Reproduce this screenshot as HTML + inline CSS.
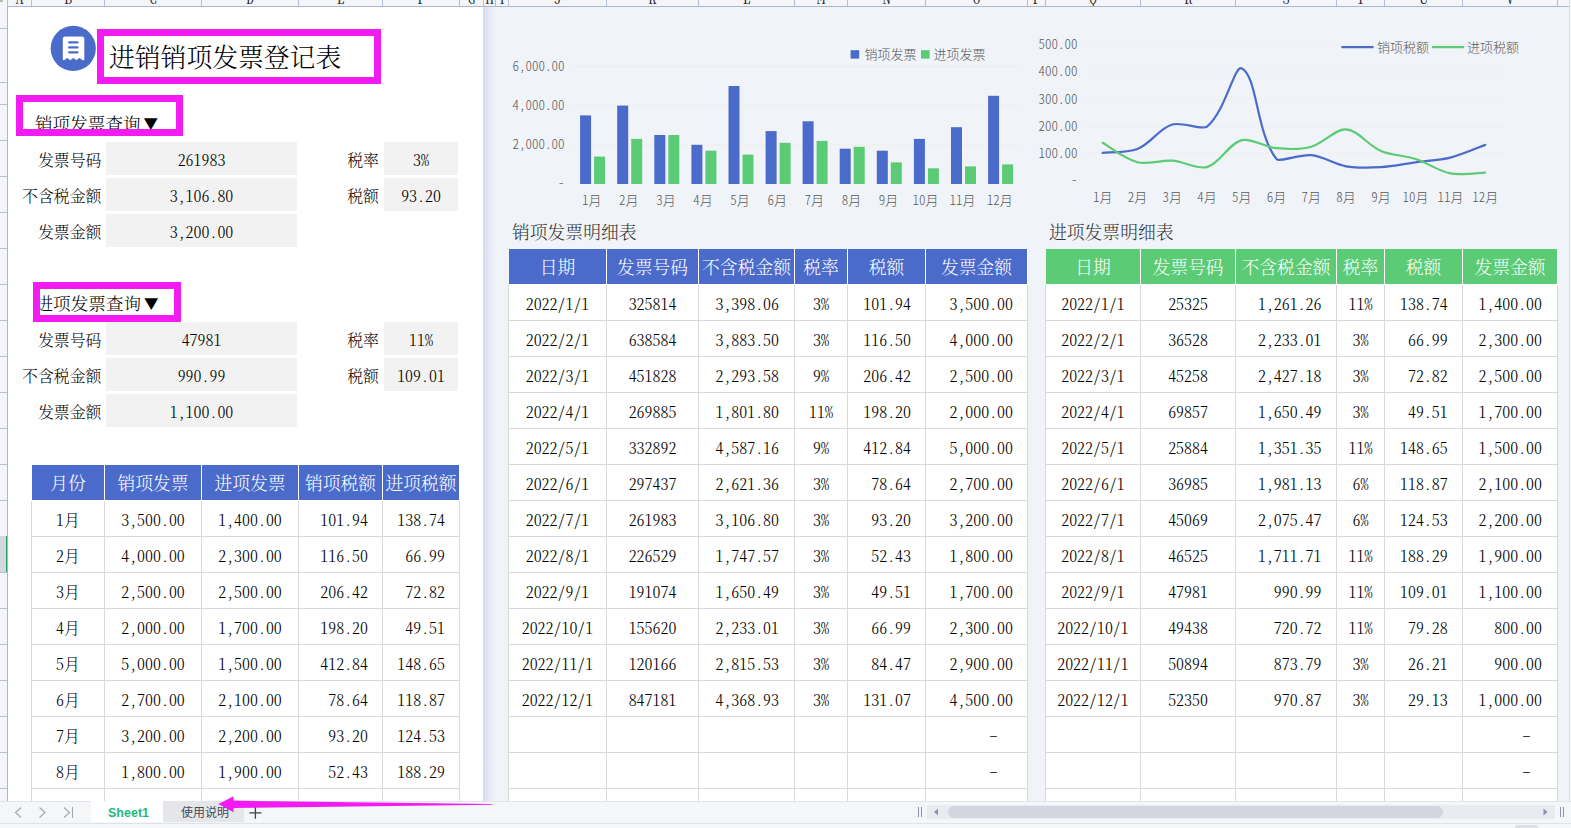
<!DOCTYPE html><html lang="zh"><head><meta charset="utf-8"><title>进销销项发票登记表</title><style>
*{box-sizing:border-box;margin:0;padding:0}
html,body{width:1571px;height:828px;overflow:hidden;background:#fff}
body{position:relative;font-family:"Noto Serif CJK SC","Liberation Serif",serif;font-feature-settings:"hwid";color:#000;font-size:15.9px;font-weight:300}
.abs{position:absolute}
.c{position:absolute;display:flex;align-items:center;justify-content:center;white-space:nowrap;overflow:hidden}
.r{justify-content:flex-end}
.l{justify-content:flex-start}
.sheet{position:absolute;left:0;top:0;width:1569px;height:801px;overflow:hidden;background:#fff}
.rbg{position:absolute;left:483px;top:6px;width:1086px;height:795px;background:#f0f3f8}
.hgrad{position:absolute;left:483px;top:6px;width:12px;height:795px;background:linear-gradient(90deg,#d6dbec 0%,#e6eaf4 50%,#f0f3f8 100%)}
.colhdr{position:absolute;left:0;top:0;width:1569px;height:7px;background:#f4f5f9;border-bottom:1px solid #aab6d3;overflow:hidden}
.colhdr span{position:absolute;top:-13px;height:20px;line-height:20px;font-size:16.5px;text-align:center;color:#222;border-right:1px solid #b4bfd8}
.rowhdr{position:absolute;left:0;top:6px;width:8px;height:795px;background:#f4f5f9;border-right:1px solid #aab6d3;overflow:hidden}
.rowhdr i{position:absolute;left:0;width:8px;height:1px;background:#b4bfd8}
.gray{background:#f2f2f2;padding-top:1px}
.hb{background:#4b6bcb;color:#fff;font-size:17.8px}
.hg{background:#5bcb75;color:#fff;font-size:17.8px}
.cell{border-right:1px solid #d9d9d9;border-bottom:1px solid #d9d9d9;background:#fff;padding-top:2px}
.mag{position:absolute;border:7px solid #f21cf2;background:#fff;overflow:hidden}
.ct{fill:#595959;font-size:13px;font-family:"Noto Sans CJK SC","Liberation Sans",sans-serif;font-weight:300}
.ui{font-family:"Liberation Sans","Noto Sans CJK SC",sans-serif;font-feature-settings:normal;font-weight:400}
</style></head><body>
<div class="sheet">
<div class="rbg"></div><div class="hgrad"></div>
<div class="colhdr">
<span style="left:0;width:8px"></span><b style="position:absolute;left:0;top:0;width:3px;height:2px;background:#b9b9b9"></b>
<span style="left:8px;width:24px">A</span>
<span style="left:32px;width:73px">B</span>
<span style="left:105px;width:97px">C</span>
<span style="left:202px;width:97px">D</span>
<span style="left:299px;width:84px">E</span>
<span style="left:383px;width:77px">F</span>
<span style="left:460px;width:24px">G</span>
<span style="left:484px;width:12px">H</span>
<span style="left:496px;width:13px">I</span>
<span style="left:509px;width:98px">J</span>
<span style="left:607px;width:92px">K</span>
<span style="left:699px;width:96px">L</span>
<span style="left:795px;width:53px">M</span>
<span style="left:848px;width:78px">N</span>
<span style="left:926px;width:102px">O</span>
<span style="left:1028px;width:18px">P</span>
<span style="left:1046px;width:95px">Q</span>
<span style="left:1141px;width:95px">R</span>
<span style="left:1236px;width:101px">S</span>
<span style="left:1337px;width:48px">T</span>
<span style="left:1385px;width:78px">U</span>
<span style="left:1463px;width:95px">V</span>
<span style="left:1558px;width:83px">W</span>
</div>
<div class="rowhdr">
<i style="top:22px"></i>
<i style="top:76px"></i>
<i style="top:98px"></i>
<i style="top:134px"></i>
<i style="top:170px"></i>
<i style="top:206px"></i>
<i style="top:242px"></i>
<i style="top:278px"></i>
<i style="top:314px"></i>
<i style="top:350px"></i>
<i style="top:386px"></i>
<i style="top:422px"></i>
<i style="top:458px"></i>
<i style="top:494px"></i>
<i style="top:530px"></i>
<i style="top:566px"></i>
<i style="top:602px"></i>
<i style="top:638px"></i>
<i style="top:674px"></i>
<i style="top:710px"></i>
<i style="top:746px"></i>
<i style="top:782px"></i>
<i style="top:818px"></i>
<b style="position:absolute;left:0;top:530px;width:8px;height:36px;background:#d3d6de;border-right:2px solid #21a366"></b>
</div>
<svg class="abs" style="left:50px;top:25px" width="48" height="48" viewBox="0 0 48 48"><circle cx="23.25" cy="23.4" r="22.6" fill="#4b6bcb"/><path d="M13 13.7q0-1.9 1.9-1.9h17.3q1.9 0 1.9 1.9V34.9H32.6L29.6 32.7 26.45 34.9 23.3 32.7 20.2 34.9 17.1 32.7 14.3 34.9H13z" fill="#fff" stroke="#fff" stroke-width="0.4" stroke-linejoin="round"/><path d="M19.2 17.3h8.3M19.2 22.4h8.3M19.2 27.3h8.3" stroke="#4b6bcb" stroke-width="2.3" stroke-linecap="round"/></svg>
<div class="mag" style="left:97px;top:29px;width:284px;height:55px"><div class="abs" style="left:5px;top:-1px;height:41px;line-height:41px;font-size:25.8px;white-space:nowrap">进销销项发票登记表</div></div>
<div class="mag" style="left:16px;top:95px;width:167px;height:41px"><div class="abs" style="left:12px;top:3px;height:36px;line-height:36px;font-size:17.6px;white-space:nowrap">销项发票查询<span style="font-size:14.5px;position:relative;top:-1px;margin-left:3px">▼</span></div></div>
<div class="mag" style="left:33px;top:282px;width:148px;height:40px"><div class="abs" style="left:-4.5px;top:-4px;height:36px;line-height:36px;font-size:17.6px;white-space:nowrap">进项发票查询<span style="font-size:14.5px;position:relative;top:-1px;margin-left:3px">▼</span></div></div>
<div class="c r" style="left:8px;top:141px;width:93.5px;height:36px">发票号码</div>
<div class="c gray" style="left:106px;top:142px;width:191px;height:33px">261983</div>
<div class="c r" style="left:8px;top:177px;width:93.5px;height:36px">不含税金额</div>
<div class="c gray" style="left:106px;top:178px;width:191px;height:33px">3,106.80</div>
<div class="c r" style="left:8px;top:213px;width:93.5px;height:36px">发票金额</div>
<div class="c gray" style="left:106px;top:214px;width:191px;height:33px">3,200.00</div>
<div class="c r" style="left:298px;top:141px;width:81px;height:36px">税率</div>
<div class="c gray" style="left:384px;top:142px;width:74px;height:33px">3%</div>
<div class="c r" style="left:298px;top:177px;width:81px;height:36px">税额</div>
<div class="c gray" style="left:384px;top:178px;width:74px;height:33px">93.20</div>
<div class="c r" style="left:8px;top:321px;width:93.5px;height:36px">发票号码</div>
<div class="c gray" style="left:106px;top:322px;width:191px;height:33px">47981</div>
<div class="c r" style="left:8px;top:357px;width:93.5px;height:36px">不含税金额</div>
<div class="c gray" style="left:106px;top:358px;width:191px;height:33px">990.99</div>
<div class="c r" style="left:8px;top:393px;width:93.5px;height:36px">发票金额</div>
<div class="c gray" style="left:106px;top:394px;width:191px;height:33px">1,100.00</div>
<div class="c r" style="left:298px;top:321px;width:81px;height:36px">税率</div>
<div class="c gray" style="left:384px;top:322px;width:74px;height:33px">11%</div>
<div class="c r" style="left:298px;top:357px;width:81px;height:36px">税额</div>
<div class="c gray" style="left:384px;top:358px;width:74px;height:33px">109.01</div>
<div class="abs" style="left:31px;top:501px;width:1px;height:300px;background:#d9d9d9"></div>
<div class="c hb" style="left:32px;top:465px;width:73px;height:36px;border-right:1px solid #fff;border-bottom:1px solid #fff">月份</div>
<div class="c hb" style="left:105px;top:465px;width:97px;height:36px;border-right:1px solid #fff;border-bottom:1px solid #fff">销项发票</div>
<div class="c hb" style="left:202px;top:465px;width:97px;height:36px;border-right:1px solid #fff;border-bottom:1px solid #fff">进项发票</div>
<div class="c hb" style="left:299px;top:465px;width:84px;height:36px;border-right:1px solid #fff;border-bottom:1px solid #fff">销项税额</div>
<div class="c hb" style="left:383px;top:465px;width:77px;height:36px;border-right:1px solid #fff;border-bottom:1px solid #fff">进项税额</div>
<div class="c cell" style="left:32px;top:501px;width:73px;height:36px;">1月</div>
<div class="c cell" style="left:105px;top:501px;width:97px;height:36px;">3,500.00</div>
<div class="c cell" style="left:202px;top:501px;width:97px;height:36px;">1,400.00</div>
<div class="c cell r" style="left:299px;top:501px;width:84px;height:36px;padding-right:14px;">101.94</div>
<div class="c cell r" style="left:383px;top:501px;width:77px;height:36px;padding-right:14px;">138.74</div>
<div class="c cell" style="left:32px;top:537px;width:73px;height:36px;">2月</div>
<div class="c cell" style="left:105px;top:537px;width:97px;height:36px;">4,000.00</div>
<div class="c cell" style="left:202px;top:537px;width:97px;height:36px;">2,300.00</div>
<div class="c cell r" style="left:299px;top:537px;width:84px;height:36px;padding-right:14px;">116.50</div>
<div class="c cell r" style="left:383px;top:537px;width:77px;height:36px;padding-right:14px;">66.99</div>
<div class="c cell" style="left:32px;top:573px;width:73px;height:36px;">3月</div>
<div class="c cell" style="left:105px;top:573px;width:97px;height:36px;">2,500.00</div>
<div class="c cell" style="left:202px;top:573px;width:97px;height:36px;">2,500.00</div>
<div class="c cell r" style="left:299px;top:573px;width:84px;height:36px;padding-right:14px;">206.42</div>
<div class="c cell r" style="left:383px;top:573px;width:77px;height:36px;padding-right:14px;">72.82</div>
<div class="c cell" style="left:32px;top:609px;width:73px;height:36px;">4月</div>
<div class="c cell" style="left:105px;top:609px;width:97px;height:36px;">2,000.00</div>
<div class="c cell" style="left:202px;top:609px;width:97px;height:36px;">1,700.00</div>
<div class="c cell r" style="left:299px;top:609px;width:84px;height:36px;padding-right:14px;">198.20</div>
<div class="c cell r" style="left:383px;top:609px;width:77px;height:36px;padding-right:14px;">49.51</div>
<div class="c cell" style="left:32px;top:645px;width:73px;height:36px;">5月</div>
<div class="c cell" style="left:105px;top:645px;width:97px;height:36px;">5,000.00</div>
<div class="c cell" style="left:202px;top:645px;width:97px;height:36px;">1,500.00</div>
<div class="c cell r" style="left:299px;top:645px;width:84px;height:36px;padding-right:14px;">412.84</div>
<div class="c cell r" style="left:383px;top:645px;width:77px;height:36px;padding-right:14px;">148.65</div>
<div class="c cell" style="left:32px;top:681px;width:73px;height:36px;">6月</div>
<div class="c cell" style="left:105px;top:681px;width:97px;height:36px;">2,700.00</div>
<div class="c cell" style="left:202px;top:681px;width:97px;height:36px;">2,100.00</div>
<div class="c cell r" style="left:299px;top:681px;width:84px;height:36px;padding-right:14px;">78.64</div>
<div class="c cell r" style="left:383px;top:681px;width:77px;height:36px;padding-right:14px;">118.87</div>
<div class="c cell" style="left:32px;top:717px;width:73px;height:36px;">7月</div>
<div class="c cell" style="left:105px;top:717px;width:97px;height:36px;">3,200.00</div>
<div class="c cell" style="left:202px;top:717px;width:97px;height:36px;">2,200.00</div>
<div class="c cell r" style="left:299px;top:717px;width:84px;height:36px;padding-right:14px;">93.20</div>
<div class="c cell r" style="left:383px;top:717px;width:77px;height:36px;padding-right:14px;">124.53</div>
<div class="c cell" style="left:32px;top:753px;width:73px;height:36px;">8月</div>
<div class="c cell" style="left:105px;top:753px;width:97px;height:36px;">1,800.00</div>
<div class="c cell" style="left:202px;top:753px;width:97px;height:36px;">1,900.00</div>
<div class="c cell r" style="left:299px;top:753px;width:84px;height:36px;padding-right:14px;">52.43</div>
<div class="c cell r" style="left:383px;top:753px;width:77px;height:36px;padding-right:14px;">188.29</div>
<div class="c cell" style="left:32px;top:789px;width:73px;height:36px;"></div>
<div class="c cell" style="left:105px;top:789px;width:97px;height:36px;"></div>
<div class="c cell" style="left:202px;top:789px;width:97px;height:36px;"></div>
<div class="c cell r" style="left:299px;top:789px;width:84px;height:36px;padding-right:14px;"></div>
<div class="c cell r" style="left:383px;top:789px;width:77px;height:36px;padding-right:14px;"></div>
<div class="abs" style="left:508px;top:285px;width:1px;height:516px;background:#d9d9d9"></div>
<div class="c hb" style="left:509px;top:249px;width:98px;height:36px;border-right:1px solid #fff;border-bottom:1px solid #fff">日期</div>
<div class="c hb" style="left:607px;top:249px;width:92px;height:36px;border-right:1px solid #fff;border-bottom:1px solid #fff">发票号码</div>
<div class="c hb" style="left:699px;top:249px;width:96px;height:36px;border-right:1px solid #fff;border-bottom:1px solid #fff">不含税金额</div>
<div class="c hb" style="left:795px;top:249px;width:53px;height:36px;border-right:1px solid #fff;border-bottom:1px solid #fff">税率</div>
<div class="c hb" style="left:848px;top:249px;width:78px;height:36px;border-right:1px solid #fff;border-bottom:1px solid #fff">税额</div>
<div class="c hb" style="left:926px;top:249px;width:102px;height:36px;border-right:1px solid #fff;border-bottom:1px solid #fff">发票金额</div>
<div class="c cell" style="left:509px;top:285px;width:98px;height:36px;">2022/1/1</div>
<div class="c cell" style="left:607px;top:285px;width:92px;height:36px;">325814</div>
<div class="c cell r" style="left:699px;top:285px;width:96px;height:36px;padding-right:15px;">3,398.06</div>
<div class="c cell" style="left:795px;top:285px;width:53px;height:36px;">3%</div>
<div class="c cell r" style="left:848px;top:285px;width:78px;height:36px;padding-right:14px;">101.94</div>
<div class="c cell r" style="left:926px;top:285px;width:102px;height:36px;padding-right:14px;">3,500.00</div>
<div class="c cell" style="left:509px;top:321px;width:98px;height:36px;">2022/2/1</div>
<div class="c cell" style="left:607px;top:321px;width:92px;height:36px;">638584</div>
<div class="c cell r" style="left:699px;top:321px;width:96px;height:36px;padding-right:15px;">3,883.50</div>
<div class="c cell" style="left:795px;top:321px;width:53px;height:36px;">3%</div>
<div class="c cell r" style="left:848px;top:321px;width:78px;height:36px;padding-right:14px;">116.50</div>
<div class="c cell r" style="left:926px;top:321px;width:102px;height:36px;padding-right:14px;">4,000.00</div>
<div class="c cell" style="left:509px;top:357px;width:98px;height:36px;">2022/3/1</div>
<div class="c cell" style="left:607px;top:357px;width:92px;height:36px;">451828</div>
<div class="c cell r" style="left:699px;top:357px;width:96px;height:36px;padding-right:15px;">2,293.58</div>
<div class="c cell" style="left:795px;top:357px;width:53px;height:36px;">9%</div>
<div class="c cell r" style="left:848px;top:357px;width:78px;height:36px;padding-right:14px;">206.42</div>
<div class="c cell r" style="left:926px;top:357px;width:102px;height:36px;padding-right:14px;">2,500.00</div>
<div class="c cell" style="left:509px;top:393px;width:98px;height:36px;">2022/4/1</div>
<div class="c cell" style="left:607px;top:393px;width:92px;height:36px;">269885</div>
<div class="c cell r" style="left:699px;top:393px;width:96px;height:36px;padding-right:15px;">1,801.80</div>
<div class="c cell" style="left:795px;top:393px;width:53px;height:36px;">11%</div>
<div class="c cell r" style="left:848px;top:393px;width:78px;height:36px;padding-right:14px;">198.20</div>
<div class="c cell r" style="left:926px;top:393px;width:102px;height:36px;padding-right:14px;">2,000.00</div>
<div class="c cell" style="left:509px;top:429px;width:98px;height:36px;">2022/5/1</div>
<div class="c cell" style="left:607px;top:429px;width:92px;height:36px;">332892</div>
<div class="c cell r" style="left:699px;top:429px;width:96px;height:36px;padding-right:15px;">4,587.16</div>
<div class="c cell" style="left:795px;top:429px;width:53px;height:36px;">9%</div>
<div class="c cell r" style="left:848px;top:429px;width:78px;height:36px;padding-right:14px;">412.84</div>
<div class="c cell r" style="left:926px;top:429px;width:102px;height:36px;padding-right:14px;">5,000.00</div>
<div class="c cell" style="left:509px;top:465px;width:98px;height:36px;">2022/6/1</div>
<div class="c cell" style="left:607px;top:465px;width:92px;height:36px;">297437</div>
<div class="c cell r" style="left:699px;top:465px;width:96px;height:36px;padding-right:15px;">2,621.36</div>
<div class="c cell" style="left:795px;top:465px;width:53px;height:36px;">3%</div>
<div class="c cell r" style="left:848px;top:465px;width:78px;height:36px;padding-right:14px;">78.64</div>
<div class="c cell r" style="left:926px;top:465px;width:102px;height:36px;padding-right:14px;">2,700.00</div>
<div class="c cell" style="left:509px;top:501px;width:98px;height:36px;">2022/7/1</div>
<div class="c cell" style="left:607px;top:501px;width:92px;height:36px;">261983</div>
<div class="c cell r" style="left:699px;top:501px;width:96px;height:36px;padding-right:15px;">3,106.80</div>
<div class="c cell" style="left:795px;top:501px;width:53px;height:36px;">3%</div>
<div class="c cell r" style="left:848px;top:501px;width:78px;height:36px;padding-right:14px;">93.20</div>
<div class="c cell r" style="left:926px;top:501px;width:102px;height:36px;padding-right:14px;">3,200.00</div>
<div class="c cell" style="left:509px;top:537px;width:98px;height:36px;">2022/8/1</div>
<div class="c cell" style="left:607px;top:537px;width:92px;height:36px;">226529</div>
<div class="c cell r" style="left:699px;top:537px;width:96px;height:36px;padding-right:15px;">1,747.57</div>
<div class="c cell" style="left:795px;top:537px;width:53px;height:36px;">3%</div>
<div class="c cell r" style="left:848px;top:537px;width:78px;height:36px;padding-right:14px;">52.43</div>
<div class="c cell r" style="left:926px;top:537px;width:102px;height:36px;padding-right:14px;">1,800.00</div>
<div class="c cell" style="left:509px;top:573px;width:98px;height:36px;">2022/9/1</div>
<div class="c cell" style="left:607px;top:573px;width:92px;height:36px;">191074</div>
<div class="c cell r" style="left:699px;top:573px;width:96px;height:36px;padding-right:15px;">1,650.49</div>
<div class="c cell" style="left:795px;top:573px;width:53px;height:36px;">3%</div>
<div class="c cell r" style="left:848px;top:573px;width:78px;height:36px;padding-right:14px;">49.51</div>
<div class="c cell r" style="left:926px;top:573px;width:102px;height:36px;padding-right:14px;">1,700.00</div>
<div class="c cell" style="left:509px;top:609px;width:98px;height:36px;">2022/10/1</div>
<div class="c cell" style="left:607px;top:609px;width:92px;height:36px;">155620</div>
<div class="c cell r" style="left:699px;top:609px;width:96px;height:36px;padding-right:15px;">2,233.01</div>
<div class="c cell" style="left:795px;top:609px;width:53px;height:36px;">3%</div>
<div class="c cell r" style="left:848px;top:609px;width:78px;height:36px;padding-right:14px;">66.99</div>
<div class="c cell r" style="left:926px;top:609px;width:102px;height:36px;padding-right:14px;">2,300.00</div>
<div class="c cell" style="left:509px;top:645px;width:98px;height:36px;">2022/11/1</div>
<div class="c cell" style="left:607px;top:645px;width:92px;height:36px;">120166</div>
<div class="c cell r" style="left:699px;top:645px;width:96px;height:36px;padding-right:15px;">2,815.53</div>
<div class="c cell" style="left:795px;top:645px;width:53px;height:36px;">3%</div>
<div class="c cell r" style="left:848px;top:645px;width:78px;height:36px;padding-right:14px;">84.47</div>
<div class="c cell r" style="left:926px;top:645px;width:102px;height:36px;padding-right:14px;">2,900.00</div>
<div class="c cell" style="left:509px;top:681px;width:98px;height:36px;">2022/12/1</div>
<div class="c cell" style="left:607px;top:681px;width:92px;height:36px;">847181</div>
<div class="c cell r" style="left:699px;top:681px;width:96px;height:36px;padding-right:15px;">4,368.93</div>
<div class="c cell" style="left:795px;top:681px;width:53px;height:36px;">3%</div>
<div class="c cell r" style="left:848px;top:681px;width:78px;height:36px;padding-right:14px;">131.07</div>
<div class="c cell r" style="left:926px;top:681px;width:102px;height:36px;padding-right:14px;">4,500.00</div>
<div class="c cell" style="left:509px;top:717px;width:98px;height:36px;"></div>
<div class="c cell" style="left:607px;top:717px;width:92px;height:36px;"></div>
<div class="c cell r" style="left:699px;top:717px;width:96px;height:36px;padding-right:15px;"></div>
<div class="c cell" style="left:795px;top:717px;width:53px;height:36px;"></div>
<div class="c cell r" style="left:848px;top:717px;width:78px;height:36px;padding-right:14px;"></div>
<div class="c cell r" style="left:926px;top:717px;width:102px;height:36px;padding-right:29.6px;padding-top:1px;">-</div>
<div class="c cell" style="left:509px;top:753px;width:98px;height:36px;"></div>
<div class="c cell" style="left:607px;top:753px;width:92px;height:36px;"></div>
<div class="c cell r" style="left:699px;top:753px;width:96px;height:36px;padding-right:15px;"></div>
<div class="c cell" style="left:795px;top:753px;width:53px;height:36px;"></div>
<div class="c cell r" style="left:848px;top:753px;width:78px;height:36px;padding-right:14px;"></div>
<div class="c cell r" style="left:926px;top:753px;width:102px;height:36px;padding-right:29.6px;padding-top:1px;">-</div>
<div class="c cell" style="left:509px;top:789px;width:98px;height:36px;"></div>
<div class="c cell" style="left:607px;top:789px;width:92px;height:36px;"></div>
<div class="c cell r" style="left:699px;top:789px;width:96px;height:36px;padding-right:15px;"></div>
<div class="c cell" style="left:795px;top:789px;width:53px;height:36px;"></div>
<div class="c cell r" style="left:848px;top:789px;width:78px;height:36px;padding-right:14px;"></div>
<div class="c cell r" style="left:926px;top:789px;width:102px;height:36px;padding-right:14px;"></div>
<div class="abs" style="left:1045px;top:285px;width:1px;height:516px;background:#d9d9d9"></div>
<div class="c hg" style="left:1046px;top:249px;width:95px;height:36px;border-right:1px solid #fff;border-bottom:1px solid #fff">日期</div>
<div class="c hg" style="left:1141px;top:249px;width:95px;height:36px;border-right:1px solid #fff;border-bottom:1px solid #fff">发票号码</div>
<div class="c hg" style="left:1236px;top:249px;width:101px;height:36px;border-right:1px solid #fff;border-bottom:1px solid #fff">不含税金额</div>
<div class="c hg" style="left:1337px;top:249px;width:48px;height:36px;border-right:1px solid #fff;border-bottom:1px solid #fff">税率</div>
<div class="c hg" style="left:1385px;top:249px;width:78px;height:36px;border-right:1px solid #fff;border-bottom:1px solid #fff">税额</div>
<div class="c hg" style="left:1463px;top:249px;width:95px;height:36px;border-right:1px solid #fff;border-bottom:1px solid #fff">发票金额</div>
<div class="c cell" style="left:1046px;top:285px;width:95px;height:36px;">2022/1/1</div>
<div class="c cell" style="left:1141px;top:285px;width:95px;height:36px;">25325</div>
<div class="c cell r" style="left:1236px;top:285px;width:101px;height:36px;padding-right:14.5px;">1,261.26</div>
<div class="c cell" style="left:1337px;top:285px;width:48px;height:36px;">11%</div>
<div class="c cell r" style="left:1385px;top:285px;width:78px;height:36px;padding-right:14.3px;">138.74</div>
<div class="c cell r" style="left:1463px;top:285px;width:95px;height:36px;padding-right:15px;">1,400.00</div>
<div class="c cell" style="left:1046px;top:321px;width:95px;height:36px;">2022/2/1</div>
<div class="c cell" style="left:1141px;top:321px;width:95px;height:36px;">36528</div>
<div class="c cell r" style="left:1236px;top:321px;width:101px;height:36px;padding-right:14.5px;">2,233.01</div>
<div class="c cell" style="left:1337px;top:321px;width:48px;height:36px;">3%</div>
<div class="c cell r" style="left:1385px;top:321px;width:78px;height:36px;padding-right:14.3px;">66.99</div>
<div class="c cell r" style="left:1463px;top:321px;width:95px;height:36px;padding-right:15px;">2,300.00</div>
<div class="c cell" style="left:1046px;top:357px;width:95px;height:36px;">2022/3/1</div>
<div class="c cell" style="left:1141px;top:357px;width:95px;height:36px;">45258</div>
<div class="c cell r" style="left:1236px;top:357px;width:101px;height:36px;padding-right:14.5px;">2,427.18</div>
<div class="c cell" style="left:1337px;top:357px;width:48px;height:36px;">3%</div>
<div class="c cell r" style="left:1385px;top:357px;width:78px;height:36px;padding-right:14.3px;">72.82</div>
<div class="c cell r" style="left:1463px;top:357px;width:95px;height:36px;padding-right:15px;">2,500.00</div>
<div class="c cell" style="left:1046px;top:393px;width:95px;height:36px;">2022/4/1</div>
<div class="c cell" style="left:1141px;top:393px;width:95px;height:36px;">69857</div>
<div class="c cell r" style="left:1236px;top:393px;width:101px;height:36px;padding-right:14.5px;">1,650.49</div>
<div class="c cell" style="left:1337px;top:393px;width:48px;height:36px;">3%</div>
<div class="c cell r" style="left:1385px;top:393px;width:78px;height:36px;padding-right:14.3px;">49.51</div>
<div class="c cell r" style="left:1463px;top:393px;width:95px;height:36px;padding-right:15px;">1,700.00</div>
<div class="c cell" style="left:1046px;top:429px;width:95px;height:36px;">2022/5/1</div>
<div class="c cell" style="left:1141px;top:429px;width:95px;height:36px;">25884</div>
<div class="c cell r" style="left:1236px;top:429px;width:101px;height:36px;padding-right:14.5px;">1,351.35</div>
<div class="c cell" style="left:1337px;top:429px;width:48px;height:36px;">11%</div>
<div class="c cell r" style="left:1385px;top:429px;width:78px;height:36px;padding-right:14.3px;">148.65</div>
<div class="c cell r" style="left:1463px;top:429px;width:95px;height:36px;padding-right:15px;">1,500.00</div>
<div class="c cell" style="left:1046px;top:465px;width:95px;height:36px;">2022/6/1</div>
<div class="c cell" style="left:1141px;top:465px;width:95px;height:36px;">36985</div>
<div class="c cell r" style="left:1236px;top:465px;width:101px;height:36px;padding-right:14.5px;">1,981.13</div>
<div class="c cell" style="left:1337px;top:465px;width:48px;height:36px;">6%</div>
<div class="c cell r" style="left:1385px;top:465px;width:78px;height:36px;padding-right:14.3px;">118.87</div>
<div class="c cell r" style="left:1463px;top:465px;width:95px;height:36px;padding-right:15px;">2,100.00</div>
<div class="c cell" style="left:1046px;top:501px;width:95px;height:36px;">2022/7/1</div>
<div class="c cell" style="left:1141px;top:501px;width:95px;height:36px;">45069</div>
<div class="c cell r" style="left:1236px;top:501px;width:101px;height:36px;padding-right:14.5px;">2,075.47</div>
<div class="c cell" style="left:1337px;top:501px;width:48px;height:36px;">6%</div>
<div class="c cell r" style="left:1385px;top:501px;width:78px;height:36px;padding-right:14.3px;">124.53</div>
<div class="c cell r" style="left:1463px;top:501px;width:95px;height:36px;padding-right:15px;">2,200.00</div>
<div class="c cell" style="left:1046px;top:537px;width:95px;height:36px;">2022/8/1</div>
<div class="c cell" style="left:1141px;top:537px;width:95px;height:36px;">46525</div>
<div class="c cell r" style="left:1236px;top:537px;width:101px;height:36px;padding-right:14.5px;">1,711.71</div>
<div class="c cell" style="left:1337px;top:537px;width:48px;height:36px;">11%</div>
<div class="c cell r" style="left:1385px;top:537px;width:78px;height:36px;padding-right:14.3px;">188.29</div>
<div class="c cell r" style="left:1463px;top:537px;width:95px;height:36px;padding-right:15px;">1,900.00</div>
<div class="c cell" style="left:1046px;top:573px;width:95px;height:36px;">2022/9/1</div>
<div class="c cell" style="left:1141px;top:573px;width:95px;height:36px;">47981</div>
<div class="c cell r" style="left:1236px;top:573px;width:101px;height:36px;padding-right:14.5px;">990.99</div>
<div class="c cell" style="left:1337px;top:573px;width:48px;height:36px;">11%</div>
<div class="c cell r" style="left:1385px;top:573px;width:78px;height:36px;padding-right:14.3px;">109.01</div>
<div class="c cell r" style="left:1463px;top:573px;width:95px;height:36px;padding-right:15px;">1,100.00</div>
<div class="c cell" style="left:1046px;top:609px;width:95px;height:36px;">2022/10/1</div>
<div class="c cell" style="left:1141px;top:609px;width:95px;height:36px;">49438</div>
<div class="c cell r" style="left:1236px;top:609px;width:101px;height:36px;padding-right:14.5px;">720.72</div>
<div class="c cell" style="left:1337px;top:609px;width:48px;height:36px;">11%</div>
<div class="c cell r" style="left:1385px;top:609px;width:78px;height:36px;padding-right:14.3px;">79.28</div>
<div class="c cell r" style="left:1463px;top:609px;width:95px;height:36px;padding-right:15px;">800.00</div>
<div class="c cell" style="left:1046px;top:645px;width:95px;height:36px;">2022/11/1</div>
<div class="c cell" style="left:1141px;top:645px;width:95px;height:36px;">50894</div>
<div class="c cell r" style="left:1236px;top:645px;width:101px;height:36px;padding-right:14.5px;">873.79</div>
<div class="c cell" style="left:1337px;top:645px;width:48px;height:36px;">3%</div>
<div class="c cell r" style="left:1385px;top:645px;width:78px;height:36px;padding-right:14.3px;">26.21</div>
<div class="c cell r" style="left:1463px;top:645px;width:95px;height:36px;padding-right:15px;">900.00</div>
<div class="c cell" style="left:1046px;top:681px;width:95px;height:36px;">2022/12/1</div>
<div class="c cell" style="left:1141px;top:681px;width:95px;height:36px;">52350</div>
<div class="c cell r" style="left:1236px;top:681px;width:101px;height:36px;padding-right:14.5px;">970.87</div>
<div class="c cell" style="left:1337px;top:681px;width:48px;height:36px;">3%</div>
<div class="c cell r" style="left:1385px;top:681px;width:78px;height:36px;padding-right:14.3px;">29.13</div>
<div class="c cell r" style="left:1463px;top:681px;width:95px;height:36px;padding-right:15px;">1,000.00</div>
<div class="c cell" style="left:1046px;top:717px;width:95px;height:36px;"></div>
<div class="c cell" style="left:1141px;top:717px;width:95px;height:36px;"></div>
<div class="c cell r" style="left:1236px;top:717px;width:101px;height:36px;padding-right:14.5px;"></div>
<div class="c cell" style="left:1337px;top:717px;width:48px;height:36px;"></div>
<div class="c cell r" style="left:1385px;top:717px;width:78px;height:36px;padding-right:14.3px;"></div>
<div class="c cell r" style="left:1463px;top:717px;width:95px;height:36px;padding-right:26.5px;padding-top:1px;">-</div>
<div class="c cell" style="left:1046px;top:753px;width:95px;height:36px;"></div>
<div class="c cell" style="left:1141px;top:753px;width:95px;height:36px;"></div>
<div class="c cell r" style="left:1236px;top:753px;width:101px;height:36px;padding-right:14.5px;"></div>
<div class="c cell" style="left:1337px;top:753px;width:48px;height:36px;"></div>
<div class="c cell r" style="left:1385px;top:753px;width:78px;height:36px;padding-right:14.3px;"></div>
<div class="c cell r" style="left:1463px;top:753px;width:95px;height:36px;padding-right:26.5px;padding-top:1px;">-</div>
<div class="c cell" style="left:1046px;top:789px;width:95px;height:36px;"></div>
<div class="c cell" style="left:1141px;top:789px;width:95px;height:36px;"></div>
<div class="c cell r" style="left:1236px;top:789px;width:101px;height:36px;padding-right:14.5px;"></div>
<div class="c cell" style="left:1337px;top:789px;width:48px;height:36px;"></div>
<div class="c cell r" style="left:1385px;top:789px;width:78px;height:36px;padding-right:14.3px;"></div>
<div class="c cell r" style="left:1463px;top:789px;width:95px;height:36px;padding-right:15px;"></div>
<div class="abs" style="left:512px;top:216px;height:32px;line-height:32px;font-size:17.8px;color:#333;white-space:nowrap">销项发票明细表</div>
<div class="abs" style="left:1049px;top:216px;height:32px;line-height:32px;font-size:17.8px;color:#333;white-space:nowrap">进项发票明细表</div>
<svg class="abs" style="left:500px;top:20px" width="1069" height="200" viewBox="500 20 1069 200"><path d="M574 144.8H1019" stroke="#eeeeec" stroke-width="1"/><path d="M574 105.6H1019" stroke="#eeeeec" stroke-width="1"/><path d="M574 66.4H1019" stroke="#eeeeec" stroke-width="1"/><path d="M1085.5 153.3H1503" stroke="#eeeeec" stroke-width="1"/><path d="M1085.5 126.2H1503" stroke="#eeeeec" stroke-width="1"/><path d="M1085.5 99.0H1503" stroke="#eeeeec" stroke-width="1"/><path d="M1085.5 71.9H1503" stroke="#eeeeec" stroke-width="1"/><path d="M1085.5 44.8H1503" stroke="#eeeeec" stroke-width="1"/><rect x="580.1" y="115.4" width="11" height="68.6" fill="#4b6bcb"/><rect x="594.1" y="156.6" width="11" height="27.4" fill="#5bcb75"/><text class="ct" x="591.7" y="205" text-anchor="middle">1月</text><rect x="617.2" y="105.6" width="11" height="78.4" fill="#4b6bcb"/><rect x="631.2" y="138.9" width="11" height="45.1" fill="#5bcb75"/><text class="ct" x="628.8" y="205" text-anchor="middle">2月</text><rect x="654.3" y="135.0" width="11" height="49.0" fill="#4b6bcb"/><rect x="668.3" y="135.0" width="11" height="49.0" fill="#5bcb75"/><text class="ct" x="665.9" y="205" text-anchor="middle">3月</text><rect x="691.4" y="144.8" width="11" height="39.2" fill="#4b6bcb"/><rect x="705.4" y="150.7" width="11" height="33.3" fill="#5bcb75"/><text class="ct" x="703.0" y="205" text-anchor="middle">4月</text><rect x="728.5" y="86.0" width="11" height="98.0" fill="#4b6bcb"/><rect x="742.5" y="154.6" width="11" height="29.4" fill="#5bcb75"/><text class="ct" x="740.1" y="205" text-anchor="middle">5月</text><rect x="765.6" y="131.1" width="11" height="52.9" fill="#4b6bcb"/><rect x="779.6" y="142.8" width="11" height="41.2" fill="#5bcb75"/><text class="ct" x="777.2" y="205" text-anchor="middle">6月</text><rect x="802.6" y="121.3" width="11" height="62.7" fill="#4b6bcb"/><rect x="816.6" y="140.9" width="11" height="43.1" fill="#5bcb75"/><text class="ct" x="814.3" y="205" text-anchor="middle">7月</text><rect x="839.7" y="148.7" width="11" height="35.3" fill="#4b6bcb"/><rect x="853.7" y="146.8" width="11" height="37.2" fill="#5bcb75"/><text class="ct" x="851.4" y="205" text-anchor="middle">8月</text><rect x="876.8" y="150.7" width="11" height="33.3" fill="#4b6bcb"/><rect x="890.8" y="162.4" width="11" height="21.6" fill="#5bcb75"/><text class="ct" x="888.5" y="205" text-anchor="middle">9月</text><rect x="913.9" y="138.9" width="11" height="45.1" fill="#4b6bcb"/><rect x="927.9" y="168.3" width="11" height="15.7" fill="#5bcb75"/><text class="ct" x="925.6" y="205" text-anchor="middle">10月</text><rect x="951.0" y="127.2" width="11" height="56.8" fill="#4b6bcb"/><rect x="965.0" y="166.4" width="11" height="17.6" fill="#5bcb75"/><text class="ct" x="962.6" y="205" text-anchor="middle">11月</text><rect x="988.1" y="95.8" width="11" height="88.2" fill="#4b6bcb"/><rect x="1002.1" y="164.4" width="11" height="19.6" fill="#5bcb75"/><text class="ct" x="999.7" y="205" text-anchor="middle">12月</text><text class="ct" x="564.5" y="70.9" text-anchor="end">6,000.00</text><text class="ct" x="564.5" y="110.1" text-anchor="end">4,000.00</text><text class="ct" x="564.5" y="149.3" text-anchor="end">2,000.00</text><text class="ct" x="564.5" y="187.2" text-anchor="end">-</text><rect x="850.6" y="50.2" width="8.6" height="8.4" fill="#4b6bcb"/><text class="ct" x="864.4" y="59">销项发票</text><rect x="921" y="50.2" width="8.6" height="8.4" fill="#5bcb75"/><text class="ct" x="933.5" y="59">进项发票</text><path d="M1102.7 152.8 C1108.5 152.2 1128.1 152.7 1137.5 148.9 C1151.3 143.2 1158.4 128.9 1172.2 124.5 C1181.6 121.5 1202.2 130.6 1207.0 126.7 C1225.4 111.9 1234.2 64.9 1241.8 68.4 C1257.4 75.7 1256.0 133.5 1276.6 159.1 C1279.2 162.5 1300.2 154.1 1311.3 155.2 C1323.4 156.4 1333.9 164.2 1346.1 166.3 C1357.1 168.1 1369.4 167.7 1380.9 167.1 C1392.6 166.4 1404.0 163.9 1415.6 162.3 C1427.2 160.7 1439.4 160.3 1450.4 157.6 C1462.6 154.5 1479.4 147.0 1485.2 144.9" fill="none" stroke="#4b6bcb" stroke-width="2.2" stroke-linecap="round"/><path d="M1102.7 142.8 C1108.5 146.1 1124.3 158.9 1137.5 162.3 C1147.5 164.9 1160.8 160.0 1172.2 160.7 C1184.0 161.5 1197.9 169.8 1207.0 167.1 C1221.1 162.9 1227.8 143.9 1241.8 140.1 C1251.0 137.6 1264.7 147.1 1276.6 148.2 C1287.8 149.3 1301.0 149.5 1311.3 146.7 C1324.2 143.2 1335.1 128.7 1346.1 129.4 C1358.3 130.1 1367.7 145.3 1380.9 150.9 C1390.9 155.2 1404.7 155.4 1415.6 159.0 C1427.8 162.9 1437.9 170.9 1450.4 173.4 C1461.1 175.5 1479.4 172.7 1485.2 172.6" fill="none" stroke="#5bcb75" stroke-width="2.2" stroke-linecap="round"/><text class="ct" x="1102.7" y="202" text-anchor="middle">1月</text><text class="ct" x="1137.5" y="202" text-anchor="middle">2月</text><text class="ct" x="1172.2" y="202" text-anchor="middle">3月</text><text class="ct" x="1207.0" y="202" text-anchor="middle">4月</text><text class="ct" x="1241.8" y="202" text-anchor="middle">5月</text><text class="ct" x="1276.6" y="202" text-anchor="middle">6月</text><text class="ct" x="1311.3" y="202" text-anchor="middle">7月</text><text class="ct" x="1346.1" y="202" text-anchor="middle">8月</text><text class="ct" x="1380.9" y="202" text-anchor="middle">9月</text><text class="ct" x="1415.6" y="202" text-anchor="middle">10月</text><text class="ct" x="1450.4" y="202" text-anchor="middle">11月</text><text class="ct" x="1485.2" y="202" text-anchor="middle">12月</text><text class="ct" x="1077.5" y="183.7" text-anchor="end">-</text><text class="ct" x="1077.5" y="157.8" text-anchor="end">100.00</text><text class="ct" x="1077.5" y="130.7" text-anchor="end">200.00</text><text class="ct" x="1077.5" y="103.6" text-anchor="end">300.00</text><text class="ct" x="1077.5" y="76.4" text-anchor="end">400.00</text><text class="ct" x="1077.5" y="49.3" text-anchor="end">500.00</text><path d="M1342.3 47.2H1372.6" stroke="#4b6bcb" stroke-width="2.2" stroke-linecap="round"/><text class="ct" x="1377" y="52">销项税额</text><path d="M1432.9 47.2H1463.2" stroke="#5bcb75" stroke-width="2.2" stroke-linecap="round"/><text class="ct" x="1467" y="52">进项税额</text></svg>
</div>
<div class="abs" style="left:1569px;top:0;width:2px;height:801px;background:#f7f8fa;border-left:1px solid #d9dce4"></div>
<div class="abs ui" style="left:0;top:801px;width:1571px;height:27px;background:#f5f6f8">
<div class="abs" style="left:0;top:0;width:1571px;height:1px;background:#e3e5ea"></div>
<div class="abs" style="left:0;top:22px;width:1571px;height:1px;background:#e0e2e7"></div>
<svg class="abs" style="left:0;top:0" width="90" height="22" viewBox="0 0 90 22"><g fill="none" stroke="#a3a6ad" stroke-width="1.1"><path d="M21 6.5l-5.5 5 5.5 5"/><path d="M39.5 6.5l5.5 5 -5.5 5"/><path d="M64 6.5l5.5 5 -5.5 5M72.5 6v11"/></g></svg>
<div class="abs" style="left:91px;top:0;width:72px;height:21px;background:#fff;color:#1fb97f;font-weight:bold;font-size:12.5px;line-height:25px;text-align:center;padding-left:3px">Sheet1</div>
<div class="abs" style="left:163px;top:0;width:81px;height:21px;background:#e5e6ea;color:#444a58;font-size:12px;line-height:25.5px;text-align:center;padding-left:3px">使用说明</div>
<svg class="abs" style="left:248px;top:5px" width="14" height="14" viewBox="0 0 14 14"><path d="M7.4 0.8v12M1.4 6.8h12" stroke="#3c4254" stroke-width="1.3"/></svg>
<div class="abs" style="left:927px;top:4px;width:628px;height:14px;background:#e9ebf0"></div>
<div class="abs" style="left:948px;top:5px;width:495px;height:12px;border-radius:6px;background:#d3d6df"></div>
<svg class="abs" style="left:915px;top:4px" width="650" height="14" viewBox="915 0 650 14"><g fill="#8a93ad"><path d="M934 7l4-3.5v7z"/><path d="M1547.5 7l-4-3.5v7z"/></g><g stroke="#8a93ad" stroke-width="1"><path d="M918.5 2v10M921.5 2v10M1560.5 2v10M1563.5 2v10"/></g></svg>
<div class="abs" style="left:1515px;top:24px;width:23px;height:3px;background:#dfe1e7;border-radius:2px 2px 0 0"></div>
</div>
<svg class="abs" style="left:210px;top:790px" width="290" height="28" viewBox="210 790 290 28"><path d="M218.3 804 L233.6 796.3 L233.6 800.6 L492.3 804.1 L492.3 804.8 L233.6 808 L233.6 812.2Z" fill="#f21cf2"/></svg>
</body></html>
